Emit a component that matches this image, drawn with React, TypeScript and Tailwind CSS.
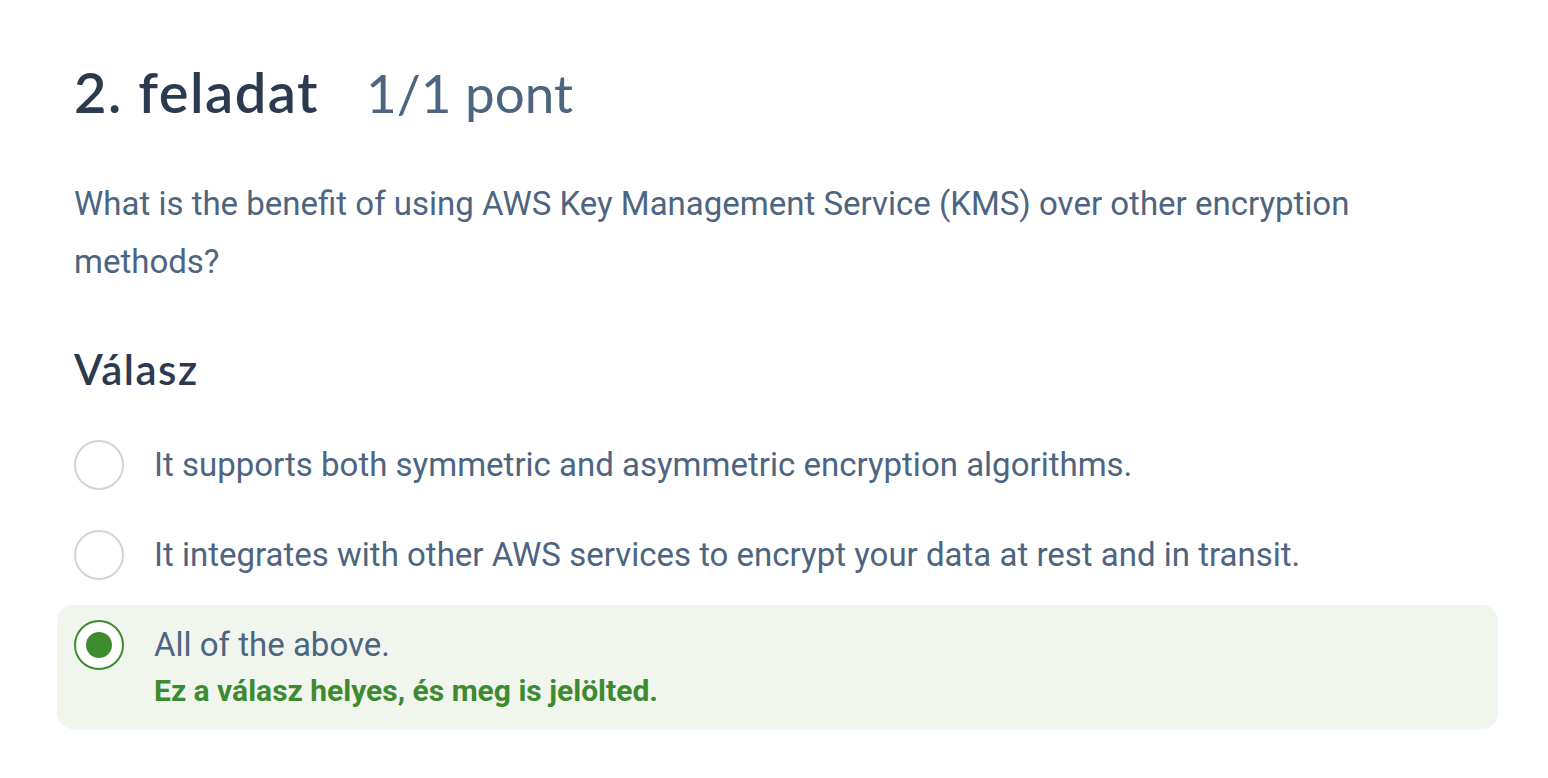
const OPTIONS = [
  { text: 'It supports both symmetric and asymmetric encryption algorithms.', selected: false },
  { text: 'It integrates with other AWS services to encrypt your data at rest and in transit.', selected: false },
  { text: 'All of the above.', selected: true },
]

const heading = { fontFamily: 'Lato, "Noto Sans", sans-serif' }
const body = { fontFamily: 'Roboto, "Liberation Sans", sans-serif' }

function Radio({ checked }: { checked: boolean }) {
  if (checked) {
    return (
      <span className="flex h-[50px] w-[50px] shrink-0 items-center justify-center rounded-full border-2 border-[#3d8b2e] bg-white">
        <span className="h-[26px] w-[26px] rounded-full bg-[#3d8b2e]" />
      </span>
    )
  }
  return <span className="h-[50px] w-[50px] shrink-0 rounded-full border-2 border-[#d4d4d4] bg-white" />
}

export default function App() {
  return (
    <div className="min-h-screen bg-white px-[57px] pt-[58px]">
      <h1 className="flex items-baseline gap-[47px] pl-[17px] leading-[68px]" style={heading}>
        <span className="text-[56px] font-semibold tracking-[1.5px] text-[#2c3a4f]">2. feladat</span>
        <span className="text-[53px] text-[#4d6580]">1/1 pont</span>
      </h1>

      <p className="mt-[48px] max-w-[1330px] pl-[17px] text-[33px] leading-[58px] text-[#4d6580]" style={body}>
        What is the benefit of using AWS Key Management Service (KMS) over other encryption methods?
      </p>

      <h2 className="mt-[53px] pl-[17px] text-[42px] font-semibold leading-[50px] tracking-[1.5px] text-[#2c3a4f]" style={heading}>
        Válasz
      </h2>

      <div className="mt-[31px] flex w-[1441px] flex-col gap-[10px]" style={body}>
        {OPTIONS.map(o => (
          <div
            key={o.text}
            className={
              o.selected
                ? 'flex items-start gap-[30px] rounded-2xl bg-[#f0f5ee] px-[17px] pt-[15px] pb-[20px]'
                : 'flex items-start gap-[30px] rounded-2xl px-[17px] py-[15px]'
            }
          >
            <Radio checked={o.selected} />
            <div className="flex flex-col">
              <span className="text-[33px] leading-[50px] text-[#4d6580]">{o.text}</span>
              {o.selected && (
                <span className="mt-[3px] text-[30px] font-bold leading-[36px] text-[#3d8b2e]">
                  Ez a válasz helyes, és meg is jelölted.
                </span>
              )}
            </div>
          </div>
        ))}
      </div>
    </div>
  )
}
